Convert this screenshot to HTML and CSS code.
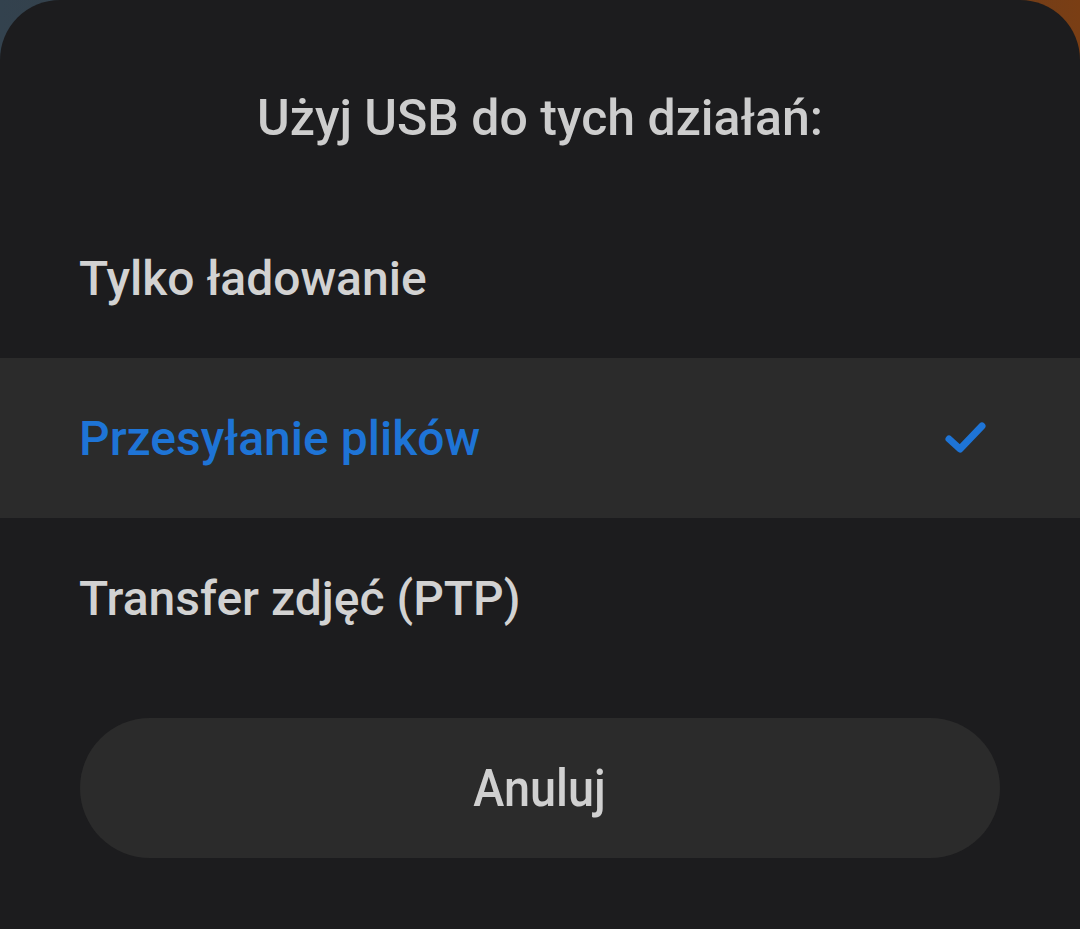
FILE: index.html
```html
<!DOCTYPE html>
<html lang="pl">
<head>
    <meta charset="UTF-8">
    <title>USB</title>
    <link rel="stylesheet" href="styles.css">
</head>
<body>

<div class="dialog">
    <h1 class="title">Użyj USB do tych działań:</h1>

    <div class="options">
        <div class="option">Tylko ładowanie</div>
        <div class="option selected">
            <span>Przesyłanie plików</span>
            <svg class="check" width="44" height="34" viewBox="0 0 44 34">
                <path d="M5 18 L16 28 L38 5" fill="none" stroke="#1e74d6" stroke-width="7" stroke-linecap="round" stroke-linejoin="round"/>
            </svg>
        </div>
        <div class="option">Transfer zdjęć (PTP)</div>
    </div>

    <div class="actions">
        <button class="cancel"><span>Anuluj</span></button>
    </div>
</div>

</body>
</html>
```

FILE: styles.css
```css
body {
    margin: 0;
    height: 929px;
    overflow: hidden;
    background: linear-gradient(90deg, #33424e 0%, #3a3a3a 50%, #7a3e14 100%);
    font-family: Roboto, "Noto Sans", sans-serif;
}

.dialog {
    background-color: #1c1c1e;
    height: 929px;
    border-radius: 60px 60px 0 0;
    box-sizing: border-box;
    padding-top: 80px;
}

.title {
    margin: 0;
    text-align: center;
    color: #cdcdcd;
    font-size: 50px;
    font-weight: 500;
    line-height: 76px;
    height: 118px;
}

.option {
    height: 160px;
    display: flex;
    align-items: center;
    justify-content: space-between;
    padding: 0 92px 0 79px;
    color: #d2d2d2;
    font-size: 48px;
    font-weight: 500;
}

.option.selected {
    background-color: #2b2b2b;
    color: #1e74d6;
}

.check {
    display: block;
}

.actions {
    padding: 40px 80px 0;
}

.cancel {
    width: 100%;
    height: 140px;
    border: none;
    border-radius: 70px;
    background-color: #2b2b2b;
    color: #d0d0d0;
    font-family: Roboto, sans-serif;
    font-size: 52px;
    font-weight: 500;
}

.cancel span {
    display: inline-block;
    transform: scaleX(0.9);
}
```
